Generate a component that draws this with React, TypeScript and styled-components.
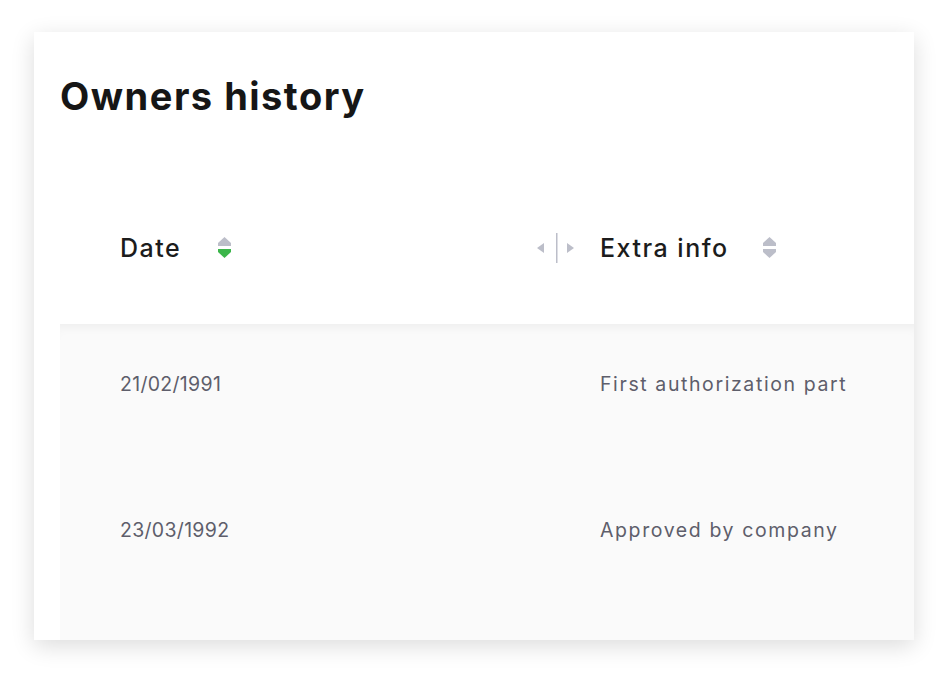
import React from "react";
import styled, { createGlobalStyle } from "styled-components";

const Global = createGlobalStyle`
  html, body { margin: 0; padding: 0; background: #ffffff; }
  body { font-family: Inter, "Noto Sans", sans-serif; }
`;

const Page = styled.div`
  padding: 32px 34px 36px 34px;
  width: 948px;
  box-sizing: border-box;
`;

const Card = styled.section`
  width: 880px;
  height: 608px;
  background: #ffffff;
  box-shadow: 0 6px 22px rgba(0, 0, 0, 0.14);
  overflow: hidden;
  display: flex;
  flex-direction: column;
  padding-left: 26px;
  box-sizing: border-box;
`;

const Title = styled.h1`
  margin: 42px 0 0 0;
  font-family: Inter, sans-serif;
  font-weight: 700;
  font-size: 38px;
  letter-spacing: 1.5px;
  line-height: 44px;
  color: #161616;
`;

const HeaderRow = styled.div`
  display: grid;
  grid-template-columns: 480px 1fr;
  height: 96px;
  margin-top: 110px;
  align-items: start;
`;

const HeaderCell = styled.div`
  display: flex;
  align-items: center;
  height: 40px;
  padding-left: 60px;
  position: relative;
`;

const HeaderLabel = styled.span`
  font-family: Inter, sans-serif;
  font-size: 25px;
  font-weight: 500;
  color: #1c1c1c;
  letter-spacing: 1.5px;
`;

const SortIcon = styled.svg<{ $gap: number }>`
  margin-left: ${(p) => p.$gap}px;
  width: 13px;
  height: 22px;
  flex-shrink: 0;
`;

const Resizer = styled.svg`
  position: absolute;
  left: -4px;
  top: 4px;
  width: 42px;
  height: 32px;
`;

const Body = styled.div`
  flex: 1;
  background: #fafafa;
  box-shadow: inset 0 10px 12px -8px rgba(0, 0, 0, 0.06);
  display: flex;
  flex-direction: column;
`;

const Row = styled.div`
  display: grid;
  grid-template-columns: 480px 1fr;
  height: 146px;
  padding-top: 48px;
  box-sizing: border-box;
`;

const Cell = styled.div<{ $spacing: number }>`
  padding-left: 60px;
  font-family: Inter, sans-serif;
  font-size: 19.5px;
  color: #5e5e6b;
  line-height: 24px;
  letter-spacing: ${(p) => p.$spacing}px;
  font-variant-numeric: proportional-nums;
`;

const Sort: React.FC<{ active?: "up" | "down"; gap: number }> = ({ active, gap }) => (
  <SortIcon $gap={gap} viewBox="0 0 13 22">
    <polygon points="6.5,0 13,6 13,9 0,9 0,6" fill={active === "up" ? "#3bb54a" : "#bcbec9"} />
    <polygon points="0,12 13,12 13,15 6.5,21 0,15" fill={active === "down" ? "#3bb54a" : "#bcbec9"} />
  </SortIcon>
);

const rows = [
  { date: "21/02/1991", info: "First authorization part" },
  { date: "23/03/1992", info: "Approved by company" },
];

export default function App() {
  return (
    <>
      <Global />
      <Page>
        <Card>
          <Title>Owners history</Title>
          <HeaderRow>
            <HeaderCell>
              <HeaderLabel>Date</HeaderLabel>
              <Sort active="down" gap={37} />
            </HeaderCell>
            <HeaderCell>
              <Resizer viewBox="0 0 42 32">
                <polygon points="1,16 8,11 8,21" fill="#bcbec9" />
                <rect x="20" y="1" width="1.5" height="30" fill="#bcbec9" />
                <polygon points="38,16 31,11 31,21" fill="#bcbec9" />
              </Resizer>
              <HeaderLabel>Extra info</HeaderLabel>
              <Sort gap={34} />
            </HeaderCell>
          </HeaderRow>
          <Body>
            {rows.map((r) => (
              <Row key={r.date}>
                <Cell $spacing={0.3}>{r.date}</Cell>
                <Cell $spacing={1.6}>{r.info}</Cell>
              </Row>
            ))}
          </Body>
        </Card>
      </Page>
    </>
  );
}
